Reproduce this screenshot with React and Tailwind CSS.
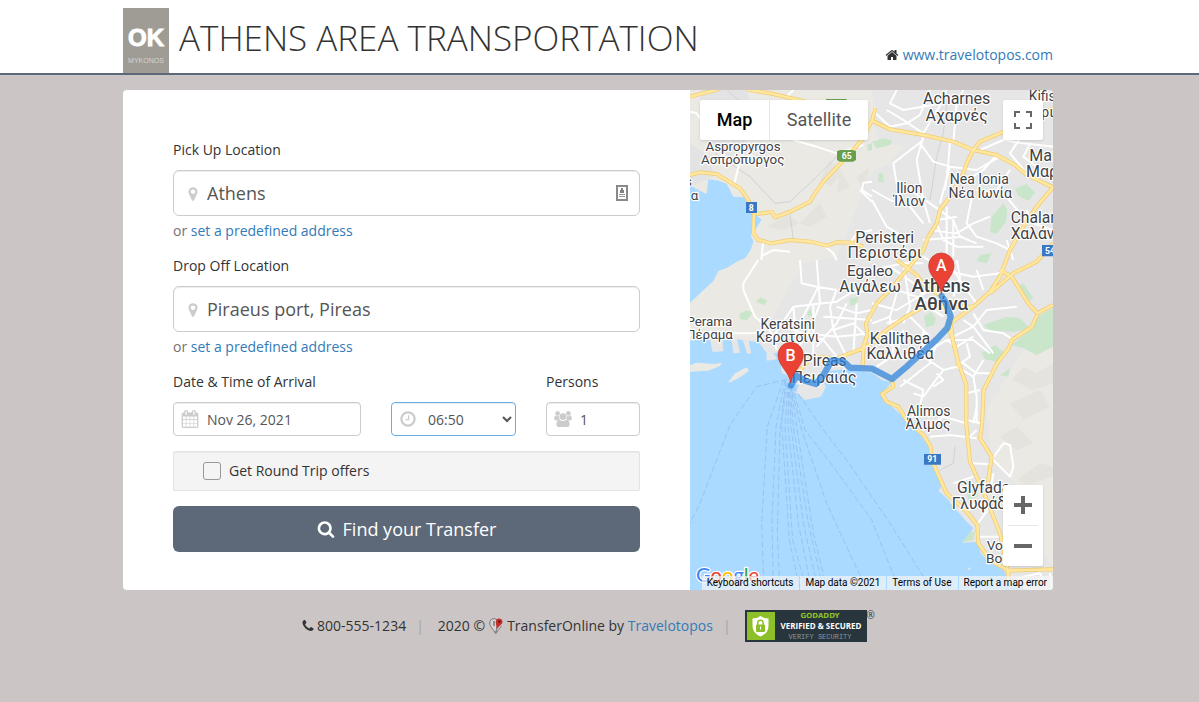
import { useState } from "react";

const ICONS = {
  home: "M1472 992v480q0 26-19 45t-45 19h-384v-384h-256v384h-384q-26 0-45-19t-19-45v-480q0-1 .5-3t.5-3l575-474 575 474q1 2 1 6zm223-69l-62 74q-8 9-21 11h-3q-13 0-21-7l-692-577-692 577q-12 8-24 7-13-2-21-11l-62-74q-8-10-7-23.5t11-21.5l719-599q32-26 76-26t76 26l244 204v-195q0-14 9-23t23-9h192q14 0 23 9t9 23v408l219 182q10 8 11 21.5t-7 23.5z",
  marker:
    "M1152 640q0-106-75-181t-181-75-181 75-75 181 75 181 181 75 181-75 75-181zm256 0q0 109-33 179l-364 774q-16 33-47.5 52t-67.5 19-67.5-19-46.5-52l-365-774q-33-70-33-179 0-212 150-362t362-150 362 150 150 362z",
  calendar:
    "M192 1664h288v-288h-288v288zm352 0h320v-288h-320v288zm-352-352h288v-320h-288v320zm352 0h320v-320h-320v320zm-352-384h288v-288h-288v288zm736 736h320v-288h-320v288zm-384-736h320v-288h-320v288zm768 736h288v-288h-288v288zm-384-352h320v-320h-320v320zm-352-864v-288q0-13-9.5-22.5t-22.5-9.5h-64q-13 0-22.5 9.5t-9.5 22.5v288q0 13 9.5 22.5t22.5 9.5h64q13 0 22.5-9.5t9.5-22.5zm736 864h288v-320h-288v320zm-384-384h320v-288h-320v288zm384 0h288v-288h-288v288zm32-480v-288q0-13-9.5-22.5t-22.5-9.5h-64q-13 0-22.5 9.5t-9.5 22.5v288q0 13 9.5 22.5t22.5 9.5h64q13 0 22.5-9.5t9.5-22.5zm384-64v1280q0 52-38 90t-90 38h-1408q-52 0-90-38t-38-90v-1280q0-52 38-90t90-38h128v-96q0-66 47-113t113-47h64q66 0 113 47t47 113v96h384v-96q0-66 47-113t113-47h64q66 0 113 47t47 113v96h128q52 0 90 38t38 90z",
  clock:
    "M1024 544v448q0 14-9 23t-23 9h-320q-14 0-23-9t-9-23v-64q0-14 9-23t23-9h224v-352q0-14 9-23t23-9h64q14 0 23 9t9 23zm416 352q0-148-73-273t-198-198-273-73-273 73-198 198-73 273 73 273 198 198 273 73 273-73 198-198 73-273zm224 0q0 209-103 385.5t-279.5 279.5-385.5 103-385.5-103-279.5-279.5-103-385.5 103-385.5 279.5-279.5 385.5-103 385.5 103 279.5 279.5 103 385.5z",
  search:
    "M1216 832q0-185-131.5-316.5t-316.5-131.5-316.5 131.5-131.5 316.5 131.5 316.5 316.5 131.5 316.5-131.5 131.5-316.5zm512 832q0 52-38 90t-90 38q-54 0-90-38l-343-342q-179 124-399 124-143 0-273.5-55.5t-225-150-150-225-55.5-273.5 55.5-273.5 150-225 225-150 273.5-55.5 273.5 55.5 225 150 150 225 55.5 273.5q0 220-124 399l343 343q37 37 37 90z",
  phone:
    "M1600 1240q0 27-10 70.5t-21 68.5q-21 50-122 106-94 51-186 51-27 0-52.5-3.5t-57.5-12.5-47.5-14.5-55.5-20.5-49-18q-98-35-175-83-128-79-264.5-215.5t-215.5-264.5q-48-77-83-175-3-9-18-49t-20.5-55.5-14.5-47.5-12.5-57.5-3.5-52.5q0-92 51-186 56-101 106-122 25-11 68.5-21t70.5-10q14 0 21 3 18 6 53 76 11 19 30 54t35 63.5 31 53.5q3 4 17.5 25t21.5 35.5 7 28.5q0 20-28.5 50t-62 55-62 53-28.5 46q0 9 5 22.5t8.5 20.5 14 24 11.5 19q76 137 174 235t235 174q2 1 19 11.5t24 14 20.5 8.5 22.5 5q18 0 46-28.5t53-62 55-62 50-28.5q14 0 28.5 7t35.5 21.5 25 17.5q25 15 53.5 31t63.5 35 54 30q70 35 76 53 3 7 3 21z",
};

function Icon({ name, className }) {
  return (
    <svg viewBox="0 0 1792 1792" fill="currentColor" aria-hidden="true" className={className}>
      <path d={ICONS[name]} />
    </svg>
  );
}

function UsersIcon({ className }) {
  return (
    <svg viewBox="0 0 18 16" fill="currentColor" aria-hidden="true" className={className}>
      <circle cx="3.6" cy="2.4" r="2.3" />
      <circle cx="14.4" cy="2.4" r="2.3" />
      <path d="M1.6 4.4Q3.4 5.8 5.2 4.9Q4.9 7 6 8.4Q4.6 8.5 3.8 9.4H2Q.2 9.4.2 7.8Q.2 4.4 1.6 4.4z" />
      <path d="M16.4 4.4Q14.6 5.8 12.8 4.9Q13.1 7 12 8.4Q13.4 8.5 14.2 9.4H16Q17.8 9.4 17.8 7.8Q17.8 4.4 16.4 4.4z" />
      <circle cx="9" cy="5.6" r="3.4" />
      <path d="M5.4 8.7Q9 11.4 12.6 8.7Q15.6 9.4 15.6 13.7Q15.6 16 13.3 16H4.7Q2.4 16 2.4 13.7Q2.4 9.4 5.4 8.7z" />
    </svg>
  );
}

// Map geometry, three units to a pixel

const BAY =
  "M0 285L25 300L50 312L55 268L85 272L110 281L130 320L165 322L175 350L195 372L215 390L200 412L182 435L190 455L182 480L165 505L140 515L112 533L85 543L70 573L35 605L0 638Z";

const SEA =
  "M0 752L60 748L68 786L100 784L98 748L125 752L130 790L150 788L142 748L158 750L172 792L184 790L176 752L208 758L230 790L230 812L262 808L250 790L268 786L275 848L292 856L302 880L328 886L315 905L345 930L392 920L408 892L396 866L418 842L470 838L546 848L576 870L606 877L576 908L580 930L606 950L630 972L655 1000L680 1020L714 1065L724 1095L730 1130L757 1185L745 1203L772 1226L790 1250L830 1295L850 1315L815 1358L864 1356L872 1390L900 1420L940 1437L950 1458L975 1475L1010 1500L0 1500Z";

const PARKS = [
  "M546 155L580 145L608 152L600 165L560 175Z",
  "M565 250L578 250L582 278L566 275Z",
  "M975 295L1010 282L1035 308L1015 332L985 318Z",
  "M905 380L940 340L952 360L948 395L920 432L900 425Z",
  "M870 495L905 490L890 520L860 512Z",
  "M530 165L546 160L546 180L535 182Z",
  "M198 635L212 622L232 632L225 645Z",
  "M148 672L170 661L188 668L172 690L150 688Z",
  "M352 665L362 658L368 676L354 680Z",
  "M478 625L505 622L500 642L482 648Z",
  "M702 680L722 666L738 685L732 705L708 712Z",
  "M880 705L950 680L990 685L1020 715L975 725L900 722Z",
  "M875 790L915 765L945 790L920 815L885 808Z",
  "M980 590L1000 580L1030 625L1020 632Z",
  "M1040 680L1089 655L1089 770L1040 795L1000 775L965 765L1026 715Z",
  "M815 1358L835 1325L855 1325L850 1350Z",
  "M830 1205L860 1190L862 1220L835 1230Z",
  "M930 855L960 835L955 860Z",
];

const HILLS = [
  "M230 410L290 375L330 400L280 420Z",
  "M330 400L390 340L410 380L360 410Z",
  "M440 310L450 240L480 290Z",
  "M500 260L540 230L520 310Z",
  "M390 270L420 210L460 250L420 290Z",
  "M965 870L1000 830L1040 850L1089 820L1089 880L1030 900Z",
  "M960 940L1050 900L1080 950L1000 990Z",
  "M930 1040L980 1010L1030 1060L980 1080Z",
  "M980 1170L1050 1120L1089 1130L1089 1160L1010 1185Z",
];

const LOCAL_ROADS =
  "M0 65L20 70L30 85 M290 20L310 0 M150 210L132 285 M310 150L380 170L440 190L520 165 M220 450L214 510 M546 320L516 300L520 278L546 275 M510 300L546 335 M480 460L500 430L546 420 M400 465L430 490L440 510 M212 500L250 480L300 485 " +
  "M205 510L160 580L160 600L195 680L230 710L260 750 M0 735L60 725L120 730L210 730 M546 600L480 610L440 635L400 640L310 650L290 680L250 740L260 780 M330 510L335 580L380 590L440 600 M380 510L390 640L360 720L300 810 M385 590L355 650L330 700L290 780 M440 600L420 650L430 720L470 800 M470 640L440 700L380 770 M440 650L500 670L546 660 M400 680L546 690 M350 730L440 740L546 730 M430 720L490 700L530 740 M370 640L370 820 M310 650L320 760 M280 710L400 750L440 800 M500 640L490 790 " +
  "M590 60L640 90L700 130L760 30L770 0 M546 60L600 110L650 100L690 75L720 0 M620 0L600 40L640 60L760 40 M700 140L690 175L680 210L700 330L720 400 M700 150L610 220L620 280L660 300L720 340 M690 160L730 215L780 230L750 340 M780 150L775 220L765 300 M820 0L800 40L790 160 M546 300L600 330L660 350L700 400 M546 330L590 410L640 440 M720 340L790 390L810 440L860 460 M740 390L800 380 M740 400L760 450L800 470L880 470 M780 230L860 240L930 200 M870 180L940 150L1000 160L1089 170 M920 195L880 240L830 270 M1000 130L960 190L1010 250 M790 380L790 500 M770 350L770 510 M720 420L800 430L850 400L900 380 M700 450L820 440 M850 300L830 400L860 440L920 460L960 480 M860 300L940 310L1000 380 M960 240L920 300 M1010 360L1030 400L1089 420 M950 450L970 510 M1040 230L1000 200L1020 160 " +
  "M546 540L640 520L700 520 M600 530L700 600 M546 640L620 660L720 600 M640 520L660 650L640 700 M700 500L760 540L850 560L930 550 M770 510L830 600L860 640 M800 510L810 560L790 620 M590 590L740 640 M620 610L600 680L546 700 M860 540L880 600 M760 680L700 640L690 590 M720 740L660 680L590 700 M640 720L620 790L560 830 M700 720L700 790L660 830 M600 680L610 790 M740 760L720 820L630 890 M820 690L850 710L910 790 M850 670L880 720L940 730L970 750 M790 740L850 710L890 660L980 650 M770 750L850 750L900 790 M690 800L770 750L800 770L850 740 M700 800L760 840L800 830 M760 840L700 920L670 910 M640 870L700 900L690 950L650 1000 M730 890L760 870L740 850 M800 830L840 800L830 760 M820 820L860 850L900 850 M800 830L850 860L860 920L860 1000 M880 810L850 860 M830 910L870 900 M860 950L850 1000 M830 990L870 1000 M700 1020L760 980L829 1000 M720 1040L780 1035L860 1045 M840 1040L860 1020 M845 1120L895 1122 M905 1110L940 1060L960 1065L970 1130L960 1160L910 1110 M790 1180L850 1160 M910 1150L900 1210L935 1180 M860 1305L900 1250 M870 1340L930 1340 M830 1265L870 1230 M960 1480L1000 1460L1050 1450L1070 1500 M1080 1450L1085 1500";

const MAJOR_ROADS =
  "M0 20L60 5L90 -4 M170 -2L250 12L300 24L345 34 M546 92L600 118L700 135L790 155L850 180L920 195L975 225L1010 255L1089 292 M556 55L546 92L530 120L520 145L480 190L400 275L375 310L360 335L300 365L255 382L245 365L205 372L187 362 M0 255L30 247L80 252L150 295L175 330L192 370L190 430L205 450L245 460L300 450L360 455L410 467L440 457L490 458L520 470 M850 180L830 220L820 250L780 320L750 360L740 400L715 440L700 480L650 540L600 600L560 640L528 700L532 735L520 770L518 830 M850 180L870 155L930 130L1000 100L1089 55 M1089 292L1040 350L1000 410L960 480L930 560L900 605L850 650L781 700 M1089 460L1040 515L970 550L900 610 M620 510L680 555L710 595L760 620 M546 755L590 720L640 685L700 650L770 650L850 650 M930 540L965 560L1015 640L1042 670L1089 645 M1041 675L1026 710L966 750L956 775L921 820L881 900L876 1005L870 1045L905 1100L895 1170L890 1210 M781 690L790 760L806 820L829 885L829 1005L840 1115L880 1205L930 1330L955 1450L955 1480 M775 710L795 770L806 830 M606 870L610 890L576 912L590 935L625 950L650 990L700 1035L722 1070L725 1110L770 1210L830 1265L862 1305L865 1360L900 1410L955 1442L1010 1440L1089 1438 M310 860L350 820L370 800L440 805L520 775L560 750";

const FERRIES =
  "M290 868L200 890L130 990L120 1005L30 1240L0 1300 M280 870L232 1010L215 1300L222 1500 M285 870L258 1010L246 1290L250 1500 M288 870L270 1020L262 1330L270 1500 M290 880L275 1000L298 1350L330 1500 M294 880L285 1010L308 1350L350 1500 M296 880L294 1010L325 1300L365 1500 M298 880L303 1010L340 1300L385 1500 M300 885L310 1010L355 1300L400 1500 M303 890L320 1010L370 1330L412 1500 M300 880L335 1020L410 1240L530 1500 M305 885L345 1020L430 1130L545 1290L628 1500 M310 890L400 1020L470 1110L600 1300L725 1500";

const ROUTE =
  "M303 886L320 857L345 872L378 882L402 852L425 811L460 814L480 833L546 836L606 867L650 830L740 748L772 714L782 680L766 635L755 618";

const LABELS = [
  ["Aspropyrgos", 159, 183, 40],
  ["Ασπρόπυργος", 158, 221, 40],
  ["Acharnes", 800, 42, 48],
  ["Αχαρνές", 800, 92, 48],
  ["Nea Ionia", 868, 282, 42],
  ["Νέα Ιωνία", 871, 324, 42],
  ["Ilion", 658, 309, 42],
  ["Ίλιον", 658, 349, 42],
  ["Peristeri", 584, 458, 48],
  ["Περιστέρι", 584, 503, 48],
  ["Egaleo", 540, 558, 46],
  ["Αιγάλεω", 540, 605, 47],
  ["Perama", 58, 708, 40],
  ["Πέραμα", 58, 748, 40],
  ["Keratsini", 293, 716, 42],
  ["Κερατσίνι", 293, 757, 42],
  ["Pireas", 404, 828, 47],
  ["Πειραιάς", 402, 878, 47],
  ["Kallithea", 630, 762, 47],
  ["Καλλιθέα", 630, 808, 47],
  ["Alimos", 716, 978, 42],
  ["Άλιμος", 714, 1018, 42],
];

const EDGE_LABELS = [
  ["Kifissia", 1016, 34, 42],
  ["ρισιά", 1054, 82, 42],
  ["Marousi", 1018, 212, 48],
  ["Μαρούσι", 1008, 260, 48],
  ["Chalandri", 962, 400, 47],
  ["Χαλάνδρι", 962, 446, 47],
  ["Glyfada", 801, 1208, 47],
  ["Γλυφάδα", 785, 1257, 47],
  ["Voula", 890, 1380, 41],
  ["Βούλα", 888, 1418, 41],
  ["s", -15, 287, 40],
  ["α", 2, 330, 40],
];

const PINS = [
  { letter: "A", x: 754, y: 527 },
  { letter: "B", x: 302, y: 795 },
];

function MapDrawing() {
  return (
    <svg
      viewBox="0 0 1089 1500"
      preserveAspectRatio="xMidYMid slice"
      className="block h-full min-h-[500px] w-full font-['Roboto','Noto_Sans',sans-serif]"
      role="img"
      aria-label="Route from Athens to Piraeus port"
    >
      <rect width="1089" height="1500" fill="#e6e6e6" />
      <path
        d="M0 0H546L560 60L546 92L580 180L546 240L440 500L340 520L270 640L240 700L200 750L0 752Z"
        fill="#ebe9e4"
      />
      <path d="M0 160L60 200L70 260L0 290Z M30 0H170L200 120L120 200L30 130Z" fill="#e3e3e3" />
      <path d="M546 150L640 170L600 220L546 245Z" fill="#ebe9e4" />
      <path d="M1089 760L1000 780L950 860L890 960L905 1100L975 1180L980 1280L1089 1430Z" fill="#ebe9e4" />
      <g fill="#e5e3dd">
        {HILLS.map((d) => (
          <path key={d} d={d} />
        ))}
      </g>
      <g fill="#c9e5ca">
        {PARKS.map((d) => (
          <path key={d} d={d} />
        ))}
      </g>
      <path d={BAY} fill="#aadaff" />
      <path d={SEA} fill="#aadaff" />
      <path
        d="M0 826L20 818L75 822L95 818L90 828L55 842L0 845Z M115 876L135 850L170 832L177 842L150 862L120 877Z M832 1438L842 1430L840 1440Z"
        fill="#ebe9e4"
      />
      <path
        d="M110 0L190 70 M75 190L180 260L255 340L300 335L370 270L440 200 M300 370L310 450 M775 0L760 130L740 200L720 330 M750 1140L790 1120L795 1070"
        fill="none"
        stroke="#cfd2d6"
        strokeWidth="3"
      />
      <path d={LOCAL_ROADS} fill="none" stroke="#fff" strokeWidth="6" strokeLinejoin="round" />
      <path d={MAJOR_ROADS} fill="none" stroke="#f1c969" strokeWidth="12" strokeLinejoin="round" />
      <path d={MAJOR_ROADS} fill="none" stroke="#ffe7a0" strokeWidth="8" strokeLinejoin="round" />
      <path d={FERRIES} fill="none" stroke="#98c3f3" strokeWidth="3" strokeDasharray="18 8" />

      <rect x="408" y="27" width="62" height="12" fill="#689f4c" />
      <path d="M441 184L450 180H489L498 184V210L489 215H450L441 210Z" fill="#689f4c" />
      <path d="M168 336h33v33h-33z M702 1092h51v32h-51z M1056 465h40v34h-40z" fill="#3b78c4" />
      <g fill="#fff" fontSize="26" fontWeight="700" textAnchor="middle">
        <text x="470" y="207">65</text>
        <text x="184" y="362">8</text>
        <text x="727" y="1117">91</text>
        <text x="1080" y="491">54</text>
      </g>

      <g fill="#3f4245" stroke="#fff" strokeWidth="7" strokeLinejoin="round" paintOrder="stroke">
        {LABELS.map(([text, x, y, size]) => (
          <text key={text} x={x} y={y} fontSize={size} textAnchor="middle">
            {text}
          </text>
        ))}
        {EDGE_LABELS.map(([text, x, y, size]) => (
          <text key={text} x={x} y={y} fontSize={size}>
            {text}
          </text>
        ))}
        <text x="753" y="607" fontSize="56" fontWeight="500" textAnchor="middle">
          Athens
        </text>
        <text x="754" y="661" fontSize="56" fontWeight="500" textAnchor="middle">
          Αθήνα
        </text>
      </g>

      <path
        d={ROUTE}
        fill="none"
        stroke="#2a82dc"
        strokeWidth="19"
        strokeLinejoin="round"
        strokeLinecap="round"
        opacity="0.72"
      />
      {PINS.map(({ letter, x, y }) => (
        <g key={letter} transform={`translate(${x} ${y})`}>
          <path
            d="M0 84C-4 50 -38 32 -38 0A38 38 0 0 1 38 0C38 32 4 50 0 84Z"
            fill="#ea4335"
            stroke="#c5322a"
            strokeWidth="2"
          />
          <text y="17" fontSize="48" fontWeight="500" fill="#fff" textAnchor="middle">
            {letter}
          </text>
        </g>
      ))}

      <text
        x="18"
        y="1476"
        fontSize="60"
        fontWeight="500"
        stroke="#fff"
        strokeWidth="7"
        paintOrder="stroke"
        className="font-['Lato',sans-serif]"
      >
        <tspan fill="#4285f4">G</tspan>
        <tspan fill="#ea4335">o</tspan>
        <tspan fill="#fbbc05">o</tspan>
        <tspan fill="#4285f4">g</tspan>
        <tspan fill="#34a853">l</tspan>
        <tspan fill="#ea4335">e</tspan>
      </text>
    </svg>
  );
}

const CREDIT_CLASS = "bg-neutral-100/70 pr-1.5 pl-[5px]";

function MapPanel() {
  return (
    <section className="relative min-h-[500px] w-full overflow-hidden font-['Roboto',sans-serif] md:w-[363px]">
      <MapDrawing />

      <div className="absolute top-2.5 left-2.5 flex h-10 rounded-xs bg-white text-lg shadow">
        <button type="button" className="w-[69px] px-2 font-medium text-black">
          Map
        </button>
        <button type="button" className="w-[99px] border-l border-gray-200 px-2 text-[#565656]">
          Satellite
        </button>
      </div>

      <button
        type="button"
        aria-label="Toggle fullscreen view"
        className="absolute top-2.5 right-2.5 flex size-10 items-center justify-center rounded-xs bg-white shadow"
      >
        <svg viewBox="0 0 18 18" className="size-[18px]" fill="#666">
          <path d="M0 0v6h2V2h4V0H0zm16 0h-4v2h4v4h2V0h-2zm0 16h-4v2h6v-6h-2v4zM2 12H0v6h6v-2H2v-4z" />
        </svg>
      </button>

      <div className="absolute right-2.5 bottom-6 flex w-10 flex-col items-center rounded-xs bg-white shadow">
        <button type="button" aria-label="Zoom in" className="flex size-10 items-center justify-center">
          <svg viewBox="0 0 18 18" className="size-[18px]" fill="#666">
            <path d="M18 7h-7V0H7v7H0v4h7v7h4v-7h7z" />
          </svg>
        </button>
        <div className="h-px w-[30px] bg-[#e6e6e6]" />
        <button type="button" aria-label="Zoom out" className="flex size-10 items-center justify-center">
          <svg viewBox="0 0 18 18" className="size-[18px]" fill="#666">
            <path d="M0 7h18v4H0z" />
          </svg>
        </button>
      </div>

      <div className="absolute right-0 bottom-0 flex gap-px text-[10px] leading-[14px] whitespace-nowrap text-black">
        <button type="button" className={CREDIT_CLASS}>
          Keyboard shortcuts
        </button>
        <span className={CREDIT_CLASS}>Map data ©2021</span>
        <a href="#terms" className={CREDIT_CLASS}>
          Terms of Use
        </a>
        <a href="#report" className={CREDIT_CLASS}>
          Report a map error
        </a>
      </div>
    </section>
  );
}

function LocationField({ id, label, value, onChange, children }) {
  return (
    <div className="mb-[15px]">
      <label htmlFor={id} className="mb-2.5 block">
        {label}
      </label>
      <div className="relative">
        <Icon name="marker" className="absolute top-4 left-3 size-4 text-[#ccc]" />
        <input
          id={id}
          type="text"
          value={value}
          onChange={(e) => onChange(e.target.value)}
          className="h-[46px] w-full rounded-md border border-[#ccc] bg-white pr-10 pl-[33px] text-lg text-[#555] shadow-[inset_0_1px_1px_rgba(0,0,0,0.075)] outline-none"
        />
        {children}
      </div>
      <p className="mt-[5px] text-[#737373]">
        or{" "}
        <a href="#predefined" className="text-[#337ab7]">
          set a predefined address
        </a>
      </p>
    </div>
  );
}

const CONTROL_CLASS =
  "h-[34px] w-full rounded border bg-white text-sm text-[#555] shadow-[inset_0_1px_1px_rgba(0,0,0,0.075)] outline-none";

function BookingForm() {
  const [pickUp, setPickUp] = useState("Athens");
  const [dropOff, setDropOff] = useState("Piraeus port, Pireas");
  const [date, setDate] = useState("Nov 26, 2021");
  const [time, setTime] = useState("06:50");
  const [persons, setPersons] = useState("1");
  const [roundTrip, setRoundTrip] = useState(false);

  return (
    <form className="flex-1 px-[50px] pt-[50px] pb-[38px]" onSubmit={(e) => e.preventDefault()}>
      <LocationField id="pickup" label="Pick Up Location" value={pickUp} onChange={setPickUp}>
        <svg viewBox="0 0 12 16" aria-hidden="true" className="absolute top-[15px] right-3 h-4 w-3">
          <rect x="1" y="1" width="10" height="14" fill="#fff" stroke="#8a8a8a" strokeWidth="2" />
          <path d="M5 3h2v2h1v3H4V5h1z" fill="#808080" />
          <path d="M3 9h6v1H3zM3 11h6v1H3z" fill="#999" />
        </svg>
      </LocationField>
      <LocationField id="dropoff" label="Drop Off Location" value={dropOff} onChange={setDropOff} />

      <div className="grid grid-cols-[188fr_125fr_94fr] gap-x-[30px] gap-y-2.5">
        <label htmlFor="date" className="col-span-2">
          Date &amp; Time of Arrival
        </label>
        <label htmlFor="persons">Persons</label>
        <div className="relative">
          <Icon name="calendar" className="absolute top-2 left-2 size-[18px] text-[#ccc]" />
          <input
            id="date"
            type="text"
            value={date}
            onChange={(e) => setDate(e.target.value)}
            className={`${CONTROL_CLASS} border-[#ccc] pl-[33px]`}
          />
        </div>
        <div className="relative">
          <select
            aria-label="Time of arrival"
            value={time}
            onChange={(e) => setTime(e.target.value)}
            className={`${CONTROL_CLASS} border-[#66afe9] pl-8`}
          >
            <option>06:45</option>
            <option>06:50</option>
            <option>06:55</option>
          </select>
          <Icon name="clock" className="pointer-events-none absolute top-2 left-2 size-[18px] text-[#ccc]" />
        </div>
        <div className="relative">
          <UsersIcon className="absolute top-[9px] left-2 h-4 w-[18px] text-[#ccc]" />
          <input
            id="persons"
            type="text"
            value={persons}
            onChange={(e) => setPersons(e.target.value)}
            className={`${CONTROL_CLASS} border-[#ccc] pl-[33px]`}
          />
        </div>
      </div>

      <label className="mt-[15px] flex h-10 items-center gap-2 rounded-xs border border-[#e3e3e3] bg-[#f4f4f4] pl-[29px] shadow-[inset_0_1px_1px_rgba(0,0,0,0.05)]">
        <input
          type="checkbox"
          checked={roundTrip}
          onChange={(e) => setRoundTrip(e.target.checked)}
          className="size-[18px] appearance-none rounded-[3px] border border-[#999] bg-transparent checked:bg-[#5d6978]"
        />
        Get Round Trip offers
      </label>

      <button
        type="submit"
        className="mt-[15px] flex h-[46px] w-full items-center justify-center gap-2 rounded-md bg-[#5d6978] text-lg text-white"
      >
        <Icon name="search" className="size-[18px]" />
        Find your Transfer
      </button>
    </form>
  );
}

function Logo() {
  return (
    <svg viewBox="0 0 46 65" className="h-[65px] w-[46px]" role="img" aria-label="OK Mykonos">
      <rect width="46" height="65" fill="#9f9b95" />
      <g fill="#fff" textAnchor="middle" className="font-['Liberation_Sans',sans-serif]">
        <text x="23" y="38" fontSize="24" fontWeight="700" stroke="#fff" strokeWidth="1">
          OK
        </text>
        <text x="23" y="55" fontSize="7" fill="#d8d6d2">
          MYKONOS
        </text>
      </g>
    </svg>
  );
}

function SecurityBadge() {
  return (
    <svg viewBox="0 0 122 32" className="h-8 w-[122px]" role="img" aria-label="GoDaddy Verified and Secured">
      <rect width="122" height="32" fill="#28353c" />
      <rect x="2" y="2" width="28" height="28" fill="#8dc028" />
      <path d="M15.5 6Q19 8.500 23.500 8.500V16Q23.500 23 15.500 26.500Q7.500 23 7.500 16V8.500Q12 8.500 15.500 6z" fill="#fff" />
      <path d="M12.800 15v-2a2.700 2.700 0 0 1 5.400 0v2" fill="none" stroke="#8dc028" strokeWidth="1.500" />
      <rect x="11" y="14.500" width="9" height="7.500" rx="1" fill="#8dc028" />
      <rect x="15" y="16.500" width="1" height="3" fill="#fff" />
      <g textAnchor="middle">
        <text x="75" y="8" fontSize="7" fontWeight="700" fill="#8dc028" className="font-['DejaVu_Sans',sans-serif]">
          GODADDY
        </text>
        <text x="76" y="19" fontSize="8" fontWeight="700" fill="#fff" className="font-['Open_Sans',sans-serif]">
          VERIFIED &amp; SECURED
        </text>
        <text x="75" y="29" fontSize="7" fill="#8a979e" className="font-['Liberation_Mono',monospace]">
          VERIFY SECURITY
        </text>
      </g>
    </svg>
  );
}

function PinsLogo() {
  return (
    <svg viewBox="0 0 14 16" aria-hidden="true" className="h-4 w-3.5">
      <path d="M5 .7C2 .7.7 2.7.7 5C.7 8.500 4 11 6.500 15.300C7 11.500 9 8.500 9 5C9 2.500 7.500.7 5 .7z" fill="#d8d4d3" stroke="#777" />
      <path d="M5 3v5" stroke="#777" strokeWidth="1.500" />
      <path d="M10 .5C8 .5 6.800 2 6.800 3.800C6.800 6 7.500 8 7.500 11C9.500 8.500 13.500 6.500 13.500 3.800C13.500 2 12 .5 10 .5z" fill="#c4302b" />
      <circle cx="10.300" cy="3.600" r="1.200" fill="#5d1512" />
      <path d="M8 10L7 15.500L12.500 8" fill="none" stroke="#888" />
    </svg>
  );
}

export default function App() {
  return (
    <div className="min-h-screen bg-[#cbc6c5] font-['Open_Sans',sans-serif] text-sm leading-5 text-[#333]">
      <header className="border-b-2 border-[#5d6978] bg-white px-4 pt-2 md:pr-[23px] md:pl-0">
        <div className="mx-auto flex max-w-[930px] items-end justify-between">
          <div className="flex items-center gap-2.5">
            <Logo />
            <h1 className="mb-1.5 text-[35px] leading-10 font-light">ATHENS AREA TRANSPORTATION</h1>
          </div>
          <a href="#home" className="mb-2 flex items-center gap-1 text-[#337ab7]">
            <Icon name="home" className="size-3.5 text-[#333]" />
            www.travelotopos.com
          </a>
        </div>
      </header>

      <main className="px-4 pt-[15px] md:pr-[23px] md:pl-0">
        <div className="mx-auto flex max-w-[930px] flex-col overflow-hidden rounded bg-white md:flex-row">
          <BookingForm />
          <MapPanel />
        </div>
      </main>

      <footer className="flex flex-wrap items-center justify-center px-4 pt-5 pb-6 md:pr-[23px] md:pl-0">
        <span className="flex items-center gap-0.5">
          <Icon name="phone" className="size-3.5" />
          800-555-1234
        </span>
        <span className="mx-2.5 text-[#a5a5a5]">|</span>
        <span className="flex items-center gap-1 pl-1">
          2020 © <PinsLogo />
          <span>
            TransferOnline by{" "}
            <a href="#travelotopos" className="text-[#337ab7]">
              Travelotopos
            </a>
          </span>
        </span>
        <span className="mx-2.5 text-[#a5a5a5]">|</span>
        <span className="flex items-start pl-1">
          <SecurityBadge />
          <span className="text-[10px] leading-[10px]">®</span>
        </span>
      </footer>
    </div>
  );
}
